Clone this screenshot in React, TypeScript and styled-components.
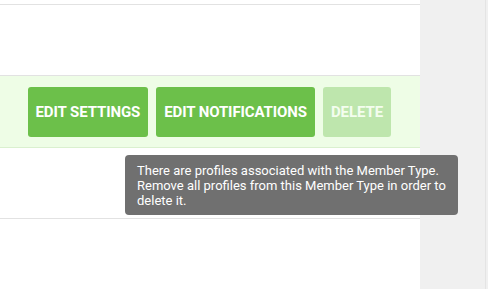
import React from "react";
import styled, { createGlobalStyle } from "styled-components";

const Global = createGlobalStyle`
  html, body { margin: 0; padding: 0; background: #ffffff; }
  body { font-family: Roboto, "Liberation Sans", Arial, sans-serif; }
  * { box-sizing: border-box; }
`;

const Page = styled.div`
  display: flex;
  width: 488px;
  height: 289px;
  overflow: hidden;
`;

const Main = styled.div`
  width: 420px;
  background: #ffffff;
  display: flex;
  flex-direction: column;
  position: relative;
`;

const Sidebar = styled.div`
  flex: 1;
  background: #f0f0f0;
  display: flex;
  justify-content: flex-end;
  padding-right: 2px;
`;

const Rail = styled.div`
  width: 1px;
  background: #e4e4e4;
`;

const Row = styled.div<{ $h: number; $active?: boolean }>`
  flex: none;
  height: ${(p) => p.$h}px;
  background: ${(p) => (p.$active ? "#eefde6" : "#ffffff")};
  border-bottom: 1px solid ${(p) => (p.$active ? "#daf0cf" : "#e2e2e2")};
  display: flex;
  align-items: center;
  justify-content: flex-end;
  padding-right: 29px;
  position: relative;
`;

const Actions = styled.div`
  display: flex;
  gap: 8px;
  position: relative;
`;

const Button = styled.button<{ $disabled?: boolean }>`
  height: 50px;
  padding: 0 8px;
  border: none;
  border-radius: 3px;
  background: #6cc04a;
  color: #ffffff;
  font-family: Roboto, "Liberation Sans", Arial, sans-serif;
  font-weight: 700;
  font-size: 15px;
  letter-spacing: -0.1px;
  text-transform: uppercase;
  cursor: pointer;
  opacity: ${(p) => (p.$disabled ? 0.36 : 1)};
`;

const Tooltip = styled.div`
  position: absolute;
  top: 68px;
  right: -67px;
  width: 333px;
  padding: 8px 12px 7px;
  background: #707070;
  color: #ffffff;
  border-radius: 4px;
  font-size: 13px;
  line-height: 15px;
  z-index: 2;
`;

export default function App() {
  return (
    <>
      <Global />
      <Page>
        <Main>
          <Row $h={5} />
          <Row $h={71} />
          <Row $h={72} $active>
            <Actions>
              <Button>Edit Settings</Button>
              <Button>Edit Notifications</Button>
              <Button $disabled>Delete</Button>
              <Tooltip>
                There are profiles associated with the Member Type. Remove all
                profiles from this Member Type in order to delete it.
              </Tooltip>
            </Actions>
          </Row>
          <Row $h={71} />
          <Row $h={71} />
        </Main>
        <Sidebar>
          <Rail />
        </Sidebar>
      </Page>
    </>
  );
}
